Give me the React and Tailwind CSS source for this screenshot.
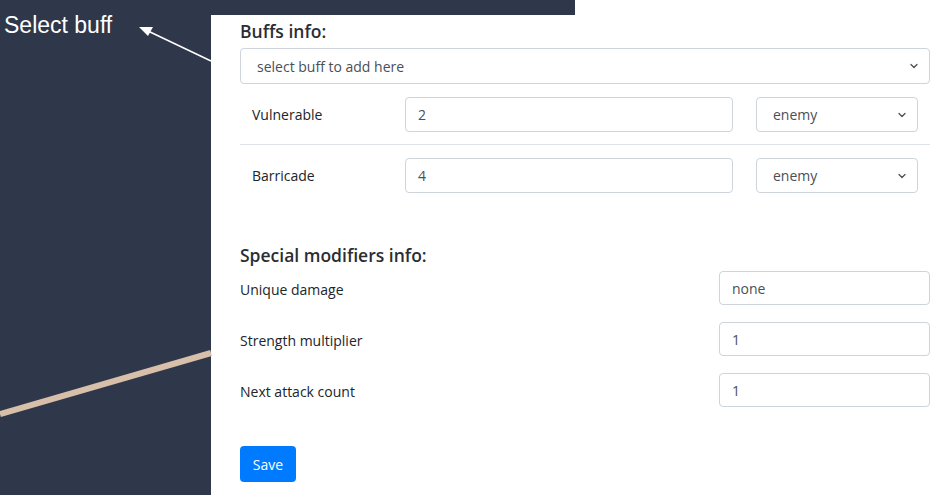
import { ChevronDown } from 'lucide-react'

const buffs = [
  { name: 'Vulnerable', value: '2', target: 'enemy' },
  { name: 'Barricade', value: '4', target: 'enemy' },
]

const modifiers = [
  { label: 'Unique damage', value: 'none' },
  { label: 'Strength multiplier', value: '1' },
  { label: 'Next attack count', value: '1' },
]

const SelectBox = ({ text, className }) => (
  <div className={`flex items-center justify-between border border-[#ced4da] rounded-[4px] bg-white text-[#495057] ${className}`}>
    <span>{text}</span>
    <ChevronDown size={12} strokeWidth={2.5} className="text-[#495057]" />
  </div>
)

const Field = ({ value, className }) => (
  <div className={`flex items-center border border-[#ced4da] rounded-[4px] bg-white text-[#495057] pl-[12px] ${className}`}>
    {value}
  </div>
)

export default function App() {
  return (
    <div className="relative w-[936px] h-[495px] overflow-hidden bg-[#2f374a] flex">
      {/* left canvas */}
      <div className="w-[211px] shrink-0">
        <p className="pl-[4px] pt-[11px] text-white text-[23px] leading-[28px]" style={{ fontFamily: '"Liberation Sans", Arial, sans-serif' }}>
          Select buff
        </p>
      </div>

      {/* right: screenshot of the form */}
      <div className="flex-1 flex flex-col" style={{ fontFamily: '"Open Sans", "Noto Sans", sans-serif' }}>
        <div className="flex h-[15px] shrink-0">
          <div className="w-[364px] bg-[#2f374a]" />
          <div className="flex-1 bg-white" />
        </div>
        <div className="flex-1 bg-white pl-[29px] pr-[6px] text-[14px] text-[#212529]">
          <h2 className="mt-[6px] text-[17.5px] leading-[20px] font-semibold text-[#2a2e33]">Buffs info:</h2>
          <SelectBox text="select buff to add here" className="mt-[7px] h-[36px] pl-[16px] pr-[9px]" />

          {buffs.map((b, i) => (
            <div
              key={b.name}
              className={`flex items-center pl-[12px] pt-[13px] pb-[12px] ${i === 0 ? 'border-b border-[#dee2e6]' : ''}`}
            >
              <span className="w-[153px]">{b.name}</span>
              <Field value={b.value} className="w-[328px] h-[35px]" />
              <SelectBox text={b.target} className="ml-[23px] w-[162px] h-[35px] pl-[16px] pr-[9px]" />
            </div>
          ))}

          <h2 className="mt-[40px] text-[17.5px] leading-[20px] font-semibold text-[#2a2e33]">Special modifiers info:</h2>
          <div className="mt-[6px] flex flex-col gap-[17px]">
            {modifiers.map((m) => (
              <div key={m.label} className="flex items-center justify-between h-[34px]">
                <span className="pt-[3px]">{m.label}</span>
                <Field value={m.value} className="w-[211px] h-[34px]" />
              </div>
            ))}
          </div>

          <button className="mt-[39px] w-[56px] h-[36px] rounded-[4px] bg-[#007bff] text-white text-[14px]">
            Save
          </button>
        </div>
      </div>

      {/* annotations drawn over the canvas */}
      <svg className="absolute inset-0 pointer-events-none" width="936" height="495">
        <line x1="0" y1="414" x2="211" y2="353" stroke="#d8bfa9" strokeWidth="6" />
        <line x1="211" y1="61" x2="148" y2="31" stroke="white" strokeWidth="1.5" />
        <polygon points="139,27 153,27 148,36" fill="white" />
      </svg>
    </div>
  )
}
